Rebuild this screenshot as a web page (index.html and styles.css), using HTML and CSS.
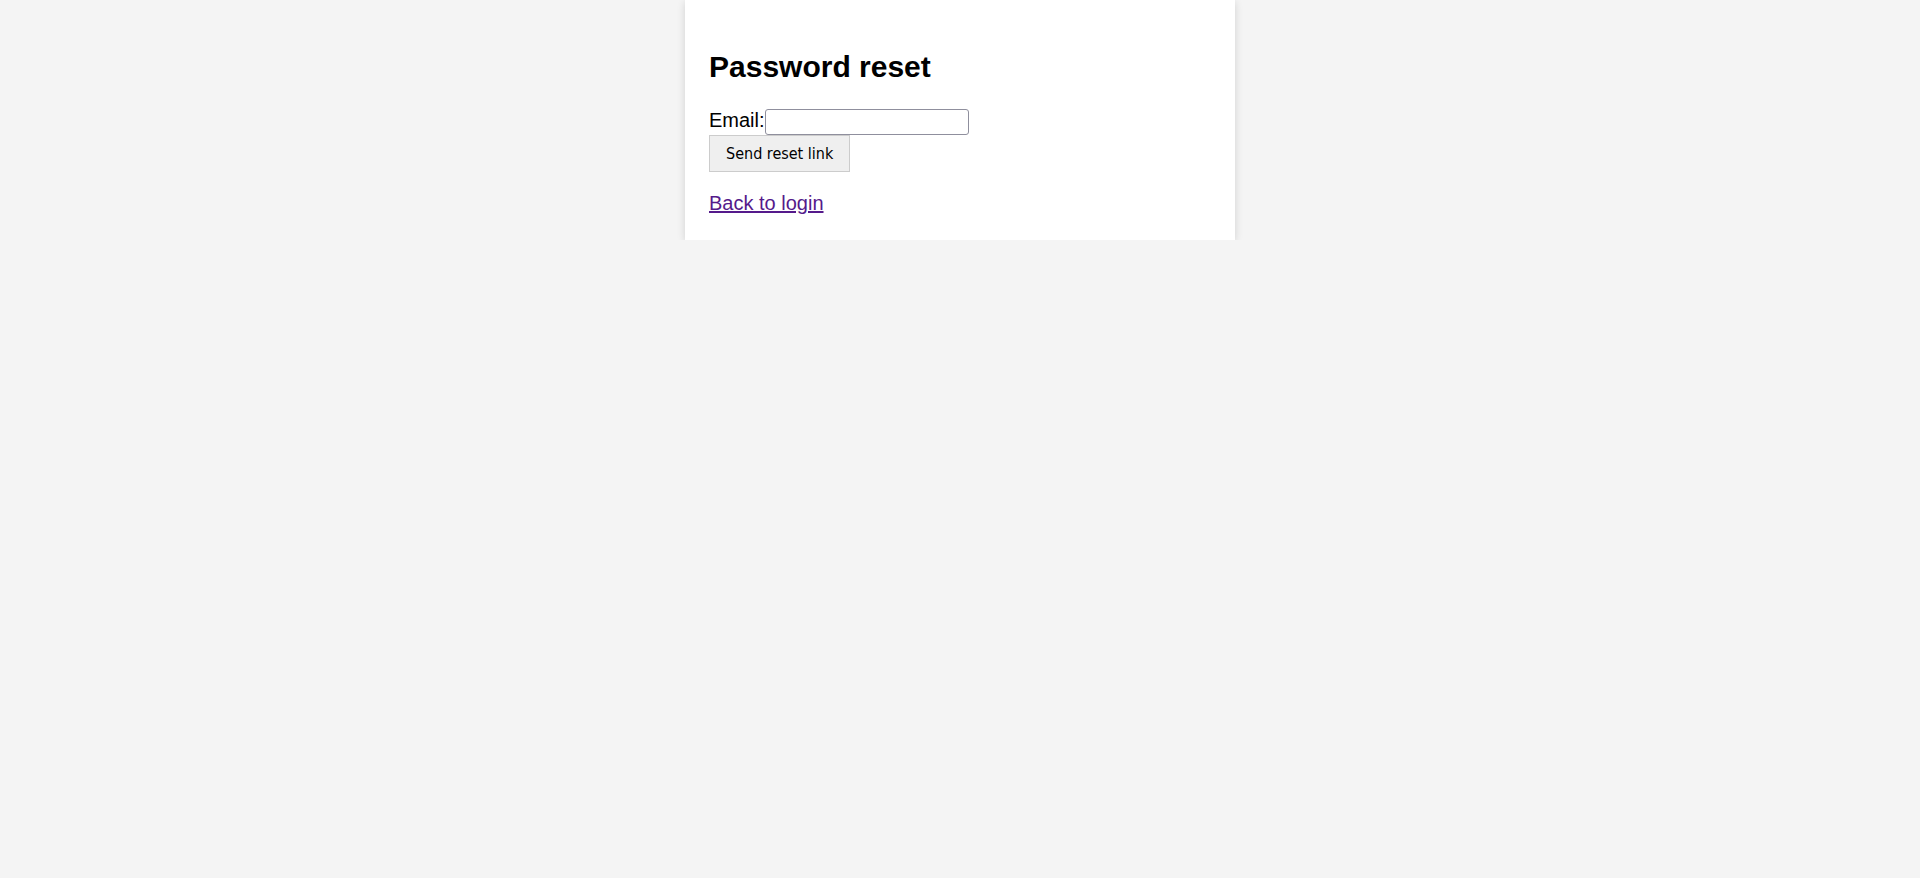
FILE: index.html
```html
<!DOCTYPE html>
<html lang="en">
<head>
<meta charset="utf-8">
<title>Password reset</title>
<link rel="stylesheet" href="styles.css">
</head>
<body>
<div class="card">
  <h2 class="title">Password reset</h2>
  <form class="form">
    <label class="label" for="email">Email:</label><input class="input" id="email" type="email"><br>
    <button class="button" type="button">Send reset link</button>
  </form>
  <p class="back"><a class="link" href="#">Back to login</a></p>
</div>
</body>
</html>
```
FILE: styles.css
```css
html, body {
  margin: 0;
  padding: 0;
}
body {
  background: #f4f4f4;
  font-family: "Liberation Sans", Arial, sans-serif;
  font-size: 20px;
  color: #000;
}
.card {
  width: 502px;
  margin: 0 auto;
  padding: 25px 24px;
  background: #fff;
  box-shadow: 0 2px 8px rgba(0, 0, 0, 0.14);
}
.card::after {
  content: "";
  display: table;
}
.card::before {
  content: "";
  display: table;
}
.title {
  font-size: 30px;
  font-weight: bold;
  margin: 24.9px 0;
}
.form {
  margin: 0;
}
.label {
  font-size: 20px;
}
.input {
  box-sizing: border-box;
  width: 204px;
  height: 26px;
  border: 1px solid #8f8f9d;
  border-radius: 3px;
  padding: 1px 2px;
  font-family: "Liberation Sans", Arial, sans-serif;
  font-size: 13.33px;
  background: #fff;
  vertical-align: baseline;
}
.button {
  font-family: "DejaVu Sans Condensed", "DejaVu Sans", sans-serif;
  font-size: 16px;
  line-height: 19px;
  padding: 8px 16px;
  margin: 0;
  background: #efefef;
  border: 1px solid #cccccc;
  border-radius: 0;
  color: #000;
}
.back {
  margin: 20px 0 0;
}
.link {
  color: #551a8b;
  text-decoration: underline;
}
```
